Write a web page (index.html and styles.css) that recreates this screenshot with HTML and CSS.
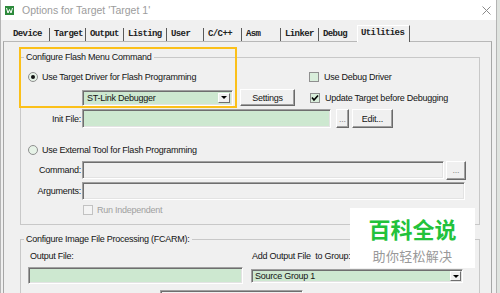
FILE: index.html
```html
<!DOCTYPE html>
<html>
<head>
<meta charset="utf-8">
<title>Options for Target</title>
<link rel="stylesheet" href="styles.css">
</head>
<body>
<div class="window">
  <div class="titlebar">
    <svg class="app-icon" viewBox="0 0 9 9"><rect width="9" height="9" fill="#2d8a3c"/><path d="M1.5 2 L3 7 L4.5 3.5 L6 7 L7.5 2" stroke="#fff" stroke-width="1" fill="none"/></svg>
    <span class="title">Options for Target 'Target 1'</span>
    <svg class="close" viewBox="0 0 9 9"><path d="M0.5 0.5L8.5 8.5M8.5 0.5L0.5 8.5" stroke="#8a8a8a" stroke-width="1"/></svg>
  </div>
  <div class="client">
    <div class="tabs">
      <div class="tab">Device</div>
      <div class="tab">Target</div>
      <div class="tab">Output</div>
      <div class="tab">Listing</div>
      <div class="tab">User</div>
      <div class="tab">C/C++</div>
      <div class="tab">Asm</div>
      <div class="tab">Linker</div>
      <div class="tab tab-prev">Debug</div>
      <div class="tab active">Utilities</div>
    </div>
    <div class="panel">
      <fieldset class="group g1">
        <legend>Configure Flash Menu Command</legend>
        <div class="row r1">
          <label class="opt opt-wide"><span class="radio on"></span>Use Target Driver for Flash Programming</label>
          <label class="opt"><span class="check"></span>Use Debug Driver</label>
        </div>
        <div class="row r2">
          <span class="lbl"></span>
          <div class="combo combo-driver"><span class="combo-text">ST-Link Debugger</span><span class="drop"></span></div>
          <button class="btn btn-settings">Settings</button>
          <label class="opt opt-upd"><span class="check"><svg viewBox="0 0 8 8"><path d="M1 3.5 L3 6 L7 1.5" stroke="#000" stroke-width="1.6" fill="none"/></svg></span>Update Target before Debugging</label>
        </div>
        <div class="row r3">
          <span class="lbl">Init File:</span>
          <div class="field green field-init"></div>
          <button class="btn btn-dots btn-dots-sm dim">...</button>
          <button class="btn btn-edit">Edit...</button>
        </div>
        <div class="row r4">
          <label class="opt opt-wide"><span class="radio"></span>Use External Tool for Flash Programming</label>
        </div>
        <div class="row r5">
          <span class="lbl">Command:</span>
          <div class="field field-cmd"></div>
          <button class="btn btn-dots btn-dots-lg dim">...</button>
        </div>
        <div class="row r6">
          <span class="lbl">Arguments:</span>
          <div class="field field-args"></div>
        </div>
        <div class="row r7">
          <label class="opt disabled"><span class="check off"></span>Run Independent</label>
        </div>
      </fieldset>
      <fieldset class="group g2">
        <legend>Configure Image File Processing (FCARM):</legend>
        <div class="img-grid">
          <span class="lbl2 lbl-out">Output File:</span>
          <span class="lbl2 lbl-add">Add Output File&nbsp; to Group:</span>
          <div class="field green field-out"></div>
          <div class="combo combo-group"><span class="combo-text">Source Group 1</span><span class="drop"></span></div>
        </div>
        <div class="field field-bottom"></div>
      </fieldset>
    </div>
  </div>
  <div class="highlight"></div>
  <div class="watermark">
    <span class="wm-main">百科全说</span>
    <span class="wm-sub">助你轻松解决</span>
  </div>
</div>
</body>
</html>
```
FILE: styles.css
```css
* { box-sizing: border-box; }
html, body { margin: 0; padding: 0; }
body {
  width: 500px;
  height: 293px;
  overflow: hidden;
  background: #dfe3df;
  font-family: "Liberation Sans", Arial, sans-serif;
  font-size: 9px;
  letter-spacing: -0.25px;
  color: #141414;
}
.window {
  position: relative;
  width: 497px;
  height: 293px;
  background: #f0f0f0;
  border-left: 1px solid #b4b4b4;
  border-right: 1px solid #b4b4b4;
  overflow: hidden;
}
.titlebar {
  height: 20px;
  background: #fff;
  display: flex;
  align-items: center;
  padding-left: 4px;
}
.app-icon { width: 9px; height: 9px; flex: none; }
.title {
  margin-left: 8px;
  font-size: 10.5px;
  letter-spacing: 0;
  color: #9c9c9c;
}
.close { margin-left: auto; margin-right: 5px; width: 9px; height: 9px; }

.client { padding-left: 2px; }
.tabs {
  display: grid;
  grid-template-columns: 41px 36px 38px 43px 37px 38px 39px 38px 38px 53px;
  align-items: end;
  height: 21px;
  margin-left: 6px;
  font-family: "Liberation Mono", "Courier New", monospace;
  font-weight: bold;
  font-size: 9px;
  letter-spacing: -0.6px;
  color: #222;
}
.tab {
  height: 13px;
  line-height: 13px;
  padding-left: 4px;
  border-right: 1px solid #5a5a5a;
  white-space: nowrap;
}
.tab-prev { border-right-color: transparent; }
.tab.active {
  position: relative;
  z-index: 1;
  height: 17px;
  line-height: 15px;
  margin-bottom: -1px;
  background: #f0f0f0;
  border-top: 1px solid #fff;
  border-left: 1px solid #fff;
  border-right: 1px solid #5a5a5a;
  padding-left: 3px;
}
.panel {
  width: 489px;
  height: 260px;
  border: 1px solid #a6a6a6;
  border-top-color: #b8b8b8;
  padding-left: 16px;
}
.group {
  margin: 0;
  padding: 0 0 8px;
  width: 460px;
  min-width: 0;
  border: 1px solid #c8c8c8;
}
.group legend {
  margin-left: 3px;
  padding: 0 2px;
  height: 13px;
  line-height: 13px;
}
.g1 { margin-top: 9px; }
.g2 { margin-top: 8px; }

.row { display: flex; align-items: center; }
.r1 { margin-top: 6px; height: 13px; }
.r2 { margin-top: 6px; height: 17px; }
.r3 { margin-top: 3px; height: 19px; }
.r4 { margin-top: 15px; height: 13px; }
.r5 { margin-top: 5px; height: 18px; }
.r6 { margin-top: 3px; height: 18px; }
.r7 { margin-top: 4px; height: 12px; padding-left: 62px; }

.lbl {
  flex: none;
  width: 61px;
  text-align: right;
  padding-right: 1px;
  white-space: nowrap;
}
.opt { display: flex; align-items: center; white-space: nowrap; }
.opt-wide { width: 288px; padding-left: 7px; }
.opt-upd { margin-left: 15px; }
.opt.disabled { color: #a0a0a0; }

.radio {
  flex: none;
  width: 10px;
  height: 10px;
  border-radius: 50%;
  border: 1px solid #8f8f8f;
  background: #e6f2e7;
  margin-right: 4px;
  display: flex;
  align-items: center;
  justify-content: center;
}
.radio.on::after {
  content: "";
  width: 4px;
  height: 4px;
  border-radius: 50%;
  background: #111;
}
.check {
  flex: none;
  width: 10px;
  height: 10px;
  border: 1px solid #8f8f8f;
  background: #d9eedb;
  margin-right: 5px;
  display: flex;
  align-items: center;
  justify-content: center;
}
.check svg { width: 8px; height: 8px; }
.check.off { background: #f4f4f4; border-color: #c2c2c2; margin-right: 4px; }

.field {
  flex: none;
  border-top: 1px solid #a0a0a0;
  border-left: 1px solid #a0a0a0;
  border-bottom: 1px solid #fff;
  border-right: 1px solid #fff;
  box-shadow: inset 1px 1px 0 #6e6e6e, inset -1px -1px 0 #e3e3e3;
  background: #f0f0f0;
}
.field.green { background: #cde8d0; }
.field-init { width: 249px; height: 19px; }
.field-cmd { width: 362px; height: 18px; }
.field-args { width: 383px; height: 18px; }

.combo {
  flex: none;
  display: flex;
  align-items: center;
  border-top: 1px solid #a0a0a0;
  border-left: 1px solid #a0a0a0;
  border-bottom: 1px solid #fff;
  border-right: 1px solid #fff;
  box-shadow: inset 1px 1px 0 #6e6e6e, inset -1px -1px 0 #e3e3e3;
  background: #cde8d0;
  padding: 2px 2px 2px 4px;
}
.combo-text { flex: 1; white-space: nowrap; }
.combo-driver { width: 151px; height: 16px; }
.drop {
  flex: none;
  width: 12px;
  height: 100%;
  background: #f0f0f0;
  border-top: 1px solid #fff;
  border-left: 1px solid #fff;
  border-right: 1px solid #6e6e6e;
  border-bottom: 1px solid #6e6e6e;
  display: flex;
  align-items: center;
  justify-content: center;
}
.drop::after {
  content: "";
  border-left: 3px solid transparent;
  border-right: 3px solid transparent;
  border-top: 3px solid #000;
}

.btn {
  flex: none;
  appearance: none;
  margin: 0;
  padding: 0;
  font: inherit;
  letter-spacing: inherit;
  color: #141414;
  background: #f0f0f0;
  border-top: 1px solid #fff;
  border-left: 1px solid #fff;
  border-right: 1px solid #6a6a6a;
  border-bottom: 1px solid #6a6a6a;
  box-shadow: inset -1px -1px 0 #a0a0a0;
  text-align: center;
}
.btn.dim { color: #8a8a8a; }
.btn-settings { width: 55px; height: 17px; margin-left: 7px; }
.btn-dots-sm { width: 13px; height: 19px; margin-left: 5px; }
.btn-edit { width: 41px; height: 19px; margin-left: 3px; }
.btn-dots-lg { width: 20px; height: 19px; margin-left: 2px; }

.img-grid {
  display: grid;
  grid-template-columns: 230px 212px;
  grid-template-rows: 13px 17px;
  row-gap: 4px;
  margin-top: 4px;
}
.lbl2 { line-height: 13px; white-space: nowrap; }
.lbl-out { padding-left: 9px; }
.lbl-add { padding-left: 1px; }
.field-out { margin-left: 7px; width: 215px; height: 17px; }
.combo-group { width: 212px; height: 14px; margin-top: 2px; padding: 1px 1px 1px 3px; }
.combo-group .drop { width: 11px; }
.field-bottom { margin-top: 6px; margin-left: 139px; width: 143px; height: 18px; }

.highlight {
  position: absolute;
  left: 18px;
  top: 47px;
  width: 218px;
  height: 61px;
  border: 2px solid #fbc01a;
}
.watermark {
  position: absolute;
  left: 349px;
  top: 208px;
  width: 125px;
  height: 60px;
  background: #fff;
  display: flex;
  flex-direction: column;
  align-items: center;
  padding-top: 8px;
  letter-spacing: 0;
  font-family: "Noto Sans CJK SC", "Noto Sans", sans-serif;
}
.wm-main {
  font-size: 22px;
  line-height: 24px;
  font-weight: bold;
  color: #22c23b;
}
.wm-sub {
  margin-top: 7px;
  font-size: 13px;
  line-height: 17px;
  letter-spacing: 0.3px;
  color: #999;
}
```
